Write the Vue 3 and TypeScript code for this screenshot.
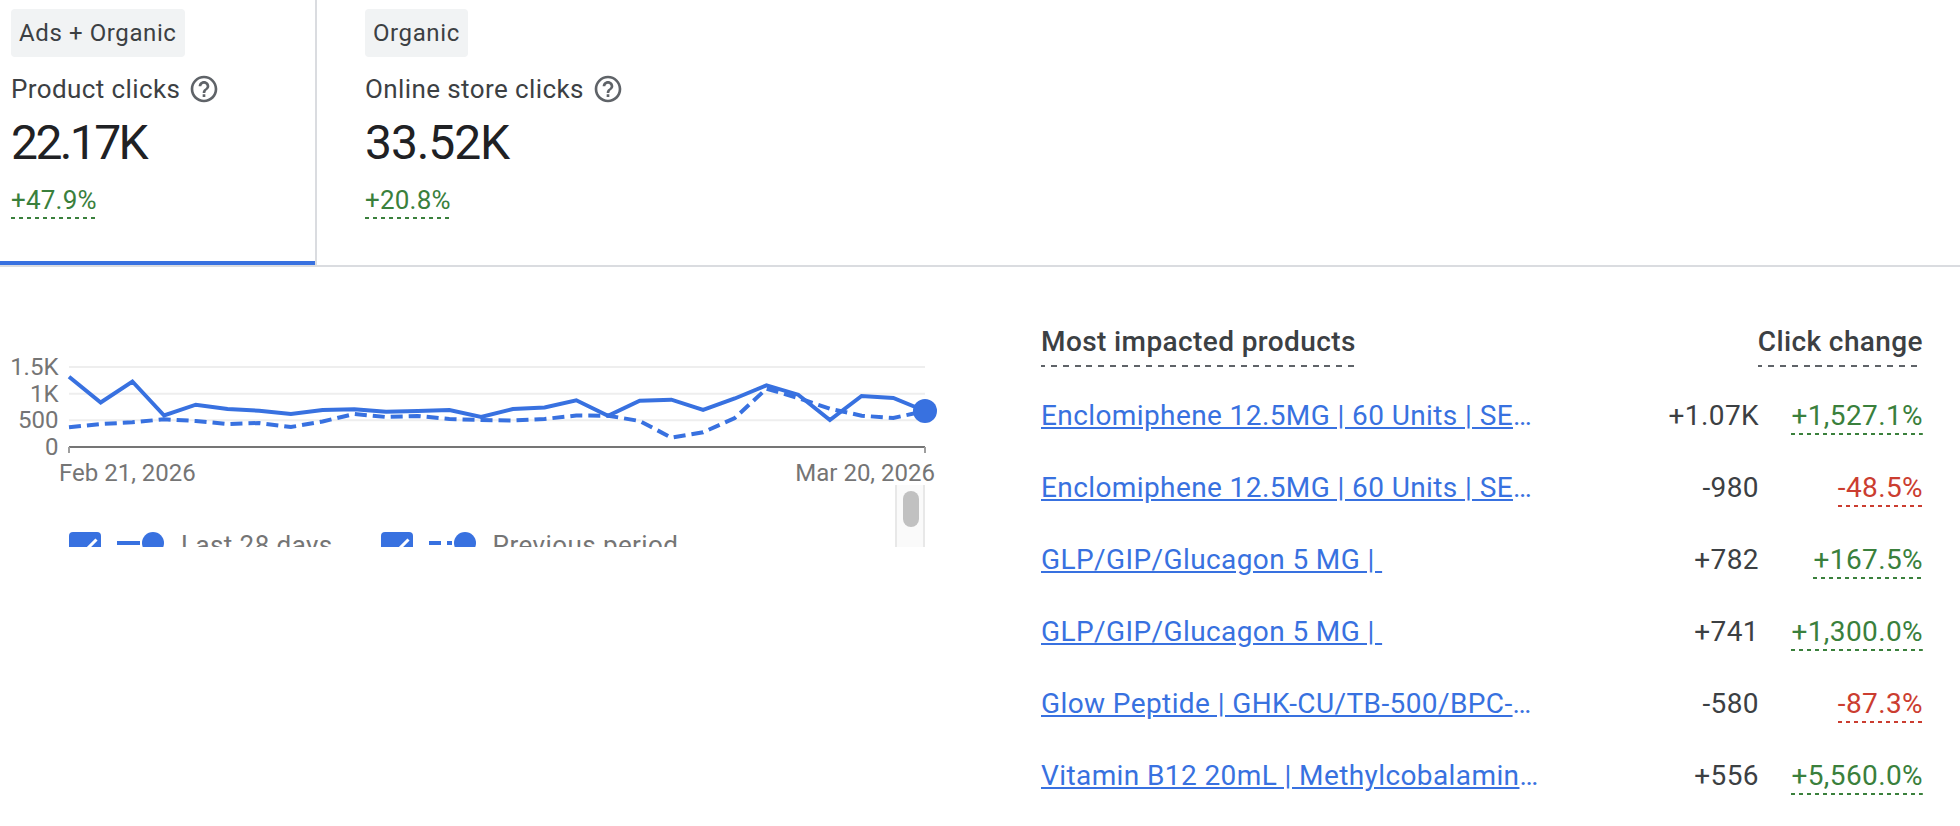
<script setup lang="ts">
interface Metric {
  source: string
  label: string
  value: string
  change: string
}

interface ProductRow {
  name: string
  truncated: boolean
  clicks: string
  change: string
}

const metrics: Metric[] = [
  { source: 'Ads + Organic', label: 'Product clicks', value: '22.17K', change: '+47.9%' },
  { source: 'Organic', label: 'Online store clicks', value: '33.52K', change: '+20.8%' },
]

const products: ProductRow[] = [
  { name: 'Enclomiphene 12.5MG | 60 Units | SE', truncated: true, clicks: '+1.07K', change: '+1,527.1%' },
  { name: 'Enclomiphene 12.5MG | 60 Units | SE', truncated: true, clicks: '-980', change: '-48.5%' },
  { name: 'GLP/GIP/Glucagon 5 MG |\u00A0', truncated: false, clicks: '+782', change: '+167.5%' },
  { name: 'GLP/GIP/Glucagon 5 MG |\u00A0', truncated: false, clicks: '+741', change: '+1,300.0%' },
  { name: 'Glow Peptide | GHK-CU/TB-500/BPC-', truncated: true, clicks: '-580', change: '-87.3%' },
  { name: 'Vitamin B12 20mL | Methylcobalamin', truncated: true, clicks: '+556', change: '+5,560.0%' },
]

// daily clicks, Feb 21 to Mar 20
const current = [
  1318, 834, 1228, 591, 793, 712, 681, 619, 694, 707, 662, 675, 694, 562,
  712, 741, 876, 587, 868, 887, 694, 909, 1157, 981, 506, 956, 919, 675,
]
const previous = [
  369, 431, 463, 519, 487, 431, 450, 375, 478, 619, 562, 581, 525, 506,
  497, 525, 591, 587, 487, 174, 276, 544, 1093, 919, 718, 587, 544, 675,
]

const ticks = [
  { value: 1500, label: '1.5K' },
  { value: 1000, label: '1K' },
  { value: 500, label: '500' },
  { value: 0, label: '0' },
]

const LEFT = 69
const RIGHT = 925
const BASE = 97
const HEIGHT = 80

const xAt = (i: number) => LEFT + (i * (RIGHT - LEFT)) / (current.length - 1)
const yAt = (value: number) => BASE - (value / 1500) * HEIGHT
const toPoints = (values: number[]) => values
  .map((v, i) => `${xAt(i).toFixed(1)},${yAt(v).toFixed(1)}`)
  .join(' ')

const legend = [
  { label: 'Last 28 days', dash: undefined },
  { label: 'Previous period', dash: '12 6' },
]
</script>

<template>
  <main class="report">
    <section class="metrics">
      <article
        v-for="(metric, i) in metrics"
        :key="metric.label"
        class="metric"
        :class="{ 'metric--active': i === 0 }"
      >
        <span class="metric__source">{{ metric.source }}</span>
        <div class="metric__label">
          {{ metric.label }}
          <svg class="metric__help" viewBox="0 0 24 24" width="32" height="32">
            <path d="M11 18h2v-2h-2v2zm1-16C6.48 2 2 6.48 2 12s4.48 10 10 10 10-4.48 10-10S17.52 2 12 2zm0 18c-4.41 0-8-3.59-8-8s3.59-8 8-8 8 3.59 8 8-3.59 8-8 8zm0-14c-2.21 0-4 1.79-4 4h2c0-1.1.9-2 2-2s2 .9 2 2c0 2-3 1.75-3 5h2c0-2.25 3-2.5 3-5 0-2.21-1.79-4-4-4z" />
          </svg>
        </div>
        <div class="metric__value">{{ metric.value }}</div>
        <span class="metric__change">{{ metric.change }}</span>
      </article>
    </section>

    <div class="details">
      <section class="trend">
        <svg class="chart" width="960" height="135" viewBox="0 0 960 135">
          <line
            v-for="tick in ticks.slice(0, 3)"
            :key="tick.value"
            class="chart__grid"
            :x1="LEFT"
            :x2="RIGHT"
            :y1="yAt(tick.value)"
            :y2="yAt(tick.value)"
          />
          <path class="chart__axis" :d="`M${LEFT} ${BASE}H${RIGHT}`" />
          <path class="chart__tick" :d="`M${LEFT} ${BASE}v6M${RIGHT} ${BASE}v6`" />
          <text
            v-for="tick in ticks"
            :key="tick.label"
            x="58.5"
            :y="yAt(tick.value) + 8"
            text-anchor="end"
          >{{ tick.label }}</text>
          <polyline class="chart__line" :points="toPoints(current)" />
          <polyline class="chart__line chart__line--previous" :points="toPoints(previous)" />
          <circle class="chart__dot" :cx="RIGHT" :cy="yAt(675)" r="12" />
          <text x="59" y="131">Feb 21, 2026</text>
          <text x="935" y="131" text-anchor="end">Mar 20, 2026</text>
        </svg>
        <div class="legend">
          <div v-for="item in legend" :key="item.label" class="legend__item">
            <svg width="32" height="32" viewBox="0 0 32 32">
              <rect width="32" height="32" rx="4" fill="#3871e0" />
              <path d="M6 17l6 6L27.500 7.500" fill="none" stroke="#fff" stroke-width="3" />
            </svg>
            <svg class="legend__key" width="48" height="24" viewBox="0 0 48 24">
              <path class="chart__line" d="M0 11H23" :stroke-dasharray="item.dash" />
              <circle class="chart__dot" cx="36" cy="11" r="11" />
            </svg>
            <span>{{ item.label }}</span>
          </div>
          <div class="scrollbar"><div class="scrollbar__thumb" /></div>
        </div>
      </section>

      <section class="products">
        <header class="products__head">
          <span>Most impacted products</span>
          <span>Click change</span>
        </header>
        <div v-for="(row, i) in products" :key="i" class="product">
          <div class="product__name"><a>{{ row.name }}</a><span v-if="row.truncated">…</span></div>
          <span class="product__clicks">{{ row.clicks }}</span>
          <div class="product__change">
            <span :class="{ down: row.change.startsWith('-') }">{{ row.change }}</span>
          </div>
        </div>
      </section>
    </div>
  </main>
</template>

<style>
body {
  background: #fff;
}
</style>

<style scoped>
.report {
  box-sizing: border-box;
  width: 1960px;
  height: 826px;
  overflow: hidden;
  color: #3c4043;
  font-family: Roboto, sans-serif;
}

.metrics {
  box-sizing: border-box;
  display: flex;
  height: 267px;
  border-bottom: 2px solid #dadce0;
}

.metric {
  box-sizing: border-box;
  display: flex;
  flex-direction: column;
  align-items: flex-start;
  padding: 9px 48px 0;
}

.metric--active {
  width: 317px;
  padding-left: 11px;
  border-right: 2px solid #dadce0;
  background: linear-gradient(#3871e0, #3871e0) bottom / 100% 4px no-repeat;
}

.metric__source {
  height: 48px;
  padding: 0 8px;
  border-radius: 4px;
  background: #f1f3f4;
  font-size: 24px;
  line-height: 48px;
  letter-spacing: 0.6px;
}

.metric__label {
  display: flex;
  align-items: center;
  gap: 8px;
  height: 32px;
  margin-top: 16px;
  font-size: 26px;
  letter-spacing: 0.4px;
}

.metric__help {
  fill: #5f6368;
}

.metric__value {
  height: 56px;
  margin-top: 10px;
  color: #202124;
  font-size: 48px;
  line-height: 56px;
  letter-spacing: -1.1px;
}

.metric--active .metric__value {
  letter-spacing: -2.6px;
}

.metric__change {
  height: 35px;
  margin-top: 13px;
  background: repeating-linear-gradient(90deg, #3a803c 0 4px, transparent 4px 8px) bottom / 100% 2px no-repeat;
  color: #3a803c;
  font-size: 26px;
  line-height: 32px;
  letter-spacing: 0.2px;
}

.details {
  display: flex;
}

.trend {
  width: 1041px;
  padding-top: 83px;
}

.chart {
  display: block;
  overflow: visible;
  fill: #757575;
  font-size: 24px;
}

.chart__grid {
  stroke: #eee;
  stroke-width: 2;
}

.chart__axis {
  fill: none;
  stroke: #757575;
  stroke-width: 2;
}

.chart__tick {
  fill: none;
  stroke: #9e9e9e;
  stroke-width: 2;
}

.chart__line {
  fill: none;
  stroke: #3871e0;
  stroke-width: 4;
}

.chart__line--previous {
  stroke-dasharray: 12 6;
}

.chart__dot {
  fill: #3871e0;
}

.legend {
  box-sizing: border-box;
  display: flex;
  gap: 48px;
  width: 925px;
  height: 62px;
  padding: 47px 0 0 69px;
  overflow: hidden;
  color: #757575;
  font-size: 26px;
  line-height: 26px;
  letter-spacing: 0.42px;
}

.legend__item {
  display: flex;
  flex: none;
  height: 32px;
}

.legend__key {
  margin: 0 16px;
}

.scrollbar {
  box-sizing: border-box;
  flex: none;
  width: 30px;
  height: 62px;
  margin: -47px 0 0 auto;
  padding: 6px 4px 0 6px;
  border: solid #e8e8e8;
  border-width: 0 2px;
  background: #fafafa;
}

.scrollbar__thumb {
  width: 16px;
  height: 36px;
  border-radius: 8px;
  background: #c1c1c1;
}

.products {
  width: 882px;
  padding-top: 58px;
  font-size: 28px;
  letter-spacing: 0.4px;
}

.products__head {
  display: flex;
  justify-content: space-between;
  margin-bottom: 12px;
  color: #3c4043;
  font-weight: 500;
  line-height: 34px;
}

.products__head span {
  height: 42px;
  background: repeating-linear-gradient(90deg, #5f6368 0 4px, transparent 4px 9.9px, #5f6368 9.9px 11.9px) bottom / 100% 2px no-repeat;
}

.product {
  display: grid;
  grid-template-columns: 540px 178px 164px;
  height: 72px;
  line-height: 74px;
  white-space: nowrap;
}

.product__name {
  color: #3871e0;
}

.product__name a {
  text-decoration: underline;
}

.product__clicks {
  text-align: right;
}

.product__change {
  display: flex;
  justify-content: flex-end;
  align-items: flex-start;
  padding-top: 20px;
}

.product__change span {
  height: 36px;
  background: repeating-linear-gradient(90deg, #3a803c 0 4px, transparent 4px 8px) bottom / 100% 2px no-repeat;
  color: #3a803c;
  line-height: 34px;
}

.product__change .down {
  background-image: repeating-linear-gradient(90deg, #cb3d30 0 4px, transparent 4px 8px);
  color: #cb3d30;
}
</style>
